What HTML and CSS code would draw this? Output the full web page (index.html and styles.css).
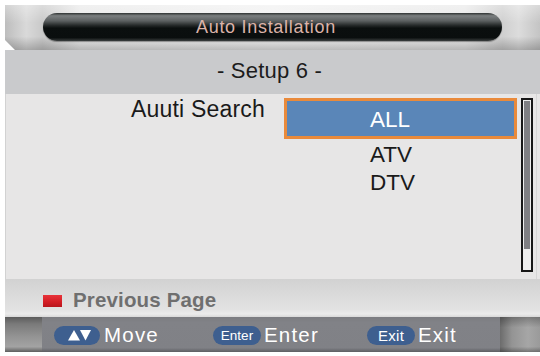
FILE: index.html
```html
<!DOCTYPE html>
<html>
<head>
<meta charset="utf-8">
<link rel="stylesheet" href="styles.css">
</head>
<body>
<div class="screen">
  <header class="header">
    <div class="title-pill"><span class="title-text">Auto Installation</span></div>
  </header>
  <div class="setup-bar">- Setup 6 -</div>
  <main class="panel">
    <div class="label">Auuti Search</div>
    <div class="options">
      <div class="option selected">ALL</div>
      <div class="option first">ATV</div>
      <div class="option">DTV</div>
    </div>
    <div class="scrollbar"><div class="thumb"></div></div>
  </main>
  <div class="prev-row">
    <span class="red-key"></span>
    <span class="prev-text">Previous Page</span>
  </div>
  <footer class="footer">
    <div class="foot-left"></div>
    <div class="foot-mid">
      <div class="hint">
        <span class="key key-move">
          <svg width="46" height="18" viewBox="0 0 46 18">
            <polygon points="14,14.5 20,4 26,14.5" fill="#ffffff"/>
            <polygon points="26,4 37,4 31.5,14.5" fill="#ffffff"/>
          </svg>
        </span>
        <span class="hint-text">Move</span>
      </div>
      <div class="hint">
        <span class="key key-enter">Enter</span>
        <span class="hint-text">Enter</span>
      </div>
      <div class="hint">
        <span class="key key-exit">Exit</span>
        <span class="hint-text">Exit</span>
      </div>
    </div>
    <div class="foot-right"></div>
  </footer>
</div>
</body>
</html>
```

FILE: styles.css
```css
html, body {
  margin: 0;
  padding: 0;
  background: #ffffff;
}

body {
  font-family: "Liberation Sans", Arial, sans-serif;
}

.screen {
  width: 535px;
  margin: 5px 0 0 5px;
}

/* ---------- header ---------- */
.header {
  height: 45px;
  display: flex;
  align-items: center;
  padding-left: 38px;
  padding-bottom: 1px;
  box-sizing: border-box;
  background:
    linear-gradient(180deg, rgba(255,255,255,0.35) 0%, rgba(255,255,255,0) 40%, rgba(0,0,0,0) 70%, rgba(0,0,0,0.22) 100%),
    linear-gradient(90deg, #bdbdbd 0%, #d9d9d9 4%, #c9c9c9 7%, #e9e9e9 14%, #f1f1f1 50%, #e9e9e9 86%, #cfcfcf 93%, #dcdcdc 96%, #c4c4c4 100%);
  clip-path: polygon(0 0, 100% 0, 100% 100%, 10px 100%, 0 78%);
}

.title-pill {
  width: 459px;
  height: 28px;
  border-radius: 14px;
  box-sizing: border-box;
  padding-right: 13px;
  padding-top: 1px;
  display: flex;
  align-items: center;
  justify-content: center;
  background: linear-gradient(180deg, #2e3232 0%, #7b7f80 10%, #5c6061 28%, #262a2a 44%, #0b0f0f 54%, #0a0e0e 88%, #3a3e3e 100%);
  box-shadow: 0 1px 1px rgba(0,0,0,0.35);
}

.title-text {
  color: #dcb3a9;
  font-size: 18px;
  letter-spacing: 0.7px;
}

/* ---------- setup bar ---------- */
.setup-bar {
  height: 44px;
  box-sizing: border-box;
  padding-top: 9px;
  padding-right: 6px;
  background: #c9cacc;
  color: #1c1c1c;
  font-size: 22px;
  line-height: 24px;
  letter-spacing: 0.2px;
  text-align: center;
}

/* ---------- main panel ---------- */
.panel {
  height: 185px;
  display: flex;
  align-items: flex-start;
  background: #e7e6e6;
  box-shadow: inset 1px 0 0 #d2d2d2, inset -3px 0 0 #e7e6e6, inset -4px 0 0 #d6d6d6;
}

.label {
  width: 260px;
  box-sizing: border-box;
  padding-top: 1.5px;
  text-align: right;
  color: #1a1a1a;
  font-size: 23px;
  line-height: 26px;
  letter-spacing: 0.2px;
}

.options {
  width: 233px;
  margin-left: 19px;
  margin-top: 4px;
}

.option {
  padding-left: 86px;
  color: #1a1a1a;
  font-size: 22.5px;
  line-height: 27.5px;
}

.option.first {
  margin-top: 2px;
}

.option.selected {
  height: 41px;
  box-sizing: border-box;
  padding-left: 83px;
  padding-top: 3px;
  border: 3px solid #e98a3b;
  background: #5a86b8;
  color: #ffffff;
  line-height: 32px;
}

.scrollbar {
  width: 12px;
  height: 174px;
  margin-left: 4px;
  margin-top: 4px;
  box-sizing: border-box;
  border: 2px solid #171717;
  padding: 1px;
  background: #eeeeee;
}

.thumb {
  height: 148px;
  background: #7f7f83;
}

/* ---------- previous page ---------- */
.prev-row {
  height: 38px;
  box-sizing: border-box;
  padding-left: 38px;
  padding-top: 4px;
  display: flex;
  align-items: center;
  gap: 11px;
  background: linear-gradient(180deg, #d2d2d2 0%, #dadada 40%, #e2e2e2 80%, #ebebeb 92%, #d8d8d8 100%);
}

.red-key {
  width: 19px;
  height: 12px;
  margin-top: 2px;
  background: linear-gradient(180deg, #e8333a 0%, #d21d24 60%, #b8161c 100%);
}

.prev-text {
  color: #6f6f6f;
  font-size: 20.5px;
  font-weight: bold;
  letter-spacing: 0.15px;
}

/* ---------- footer ---------- */
.footer {
  height: 35px;
  display: flex;
}

.foot-left {
  width: 37px;
  background: linear-gradient(180deg, #5c5c5c 0%, #7a7a7a 20%, #939393 55%, #a3a3a3 85%, #5e5e5e 100%);
}

.foot-mid {
  width: 458px;
  box-sizing: border-box;
  padding-left: 12px;
  padding-top: 1px;
  display: grid;
  grid-template-columns: 159px 154px 1fr;
  align-items: center;
  background: linear-gradient(180deg, #7b7c80 0%, #818287 15%, #808186 88%, #5e5f63 100%);
}

.foot-right {
  flex: 1;
  background:
    linear-gradient(180deg, rgba(0,0,0,0.25) 0%, rgba(0,0,0,0) 30%, rgba(0,0,0,0) 85%, rgba(0,0,0,0.3) 100%),
    linear-gradient(90deg, #6c6c6c 0%, #949494 30%, #a6a6a6 70%, #9a9a9a 100%);
}

.hint {
  display: flex;
  align-items: center;
  gap: 3px;
}

.key {
  height: 19px;
  border-radius: 9.5px;
  background: #3e5f8f;
  color: #ffffff;
  display: flex;
  align-items: center;
  justify-content: center;
  flex: none;
}

.key-move {
  width: 46px;
  margin-right: 1px;
}

.key svg {
  display: block;
}

.key-enter {
  width: 48px;
  font-size: 13.5px;
}

.key-exit {
  width: 48px;
  font-size: 15px;
  letter-spacing: 0.3px;
}

.hint-text {
  color: #ffffff;
  font-size: 20.5px;
  letter-spacing: 1.2px;
}
```
